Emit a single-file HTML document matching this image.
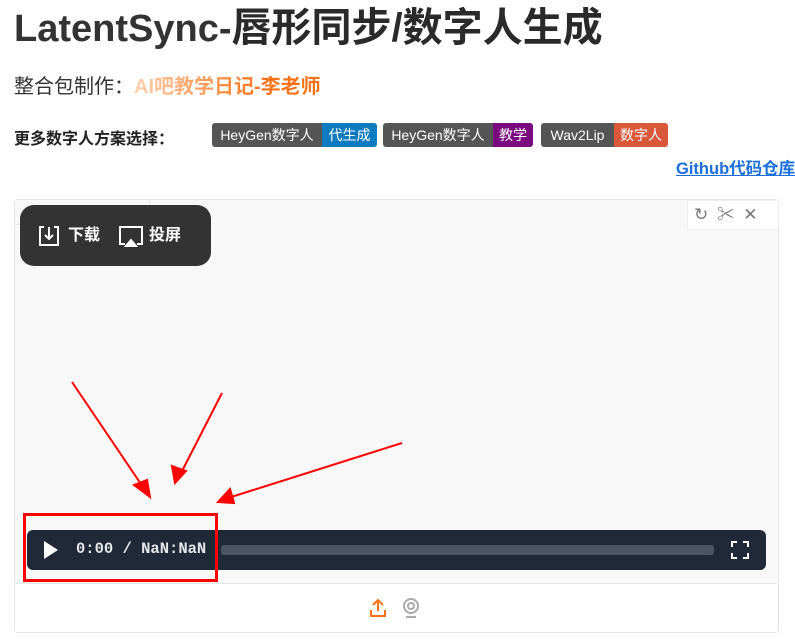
<!DOCTYPE html>
<html><head><meta charset="utf-8"><style>
body{margin:0;width:795px;height:643px;background:#fff;font-family:"Liberation Sans","Noto Sans CJK SC",sans-serif;position:relative;overflow:hidden;color:#222}
.a{position:absolute;white-space:nowrap}
h1{position:absolute;left:14px;top:-5px;margin:0;font-size:40px;font-weight:600;color:#2a2a2a}
h1 .l{font-weight:bold;font-family:"Liberation Sans",sans-serif;font-size:38px;color:#333}
.sub{left:14px;top:70px;font-size:20px;color:#333}
.sub b{background:linear-gradient(90deg,#ffd0b0,#f97316 70%);-webkit-background-clip:text;color:transparent}
.more{left:14px;top:125px;font-size:16px;font-weight:bold}
.bd{position:absolute;top:123px;height:24px;font-size:14px;color:#fff;display:flex;border-radius:3px;overflow:hidden;line-height:24px}
.bd span{padding:0 5px;background:#555;text-align:center}
.gh{left:676px;top:155px;font-size:16.5px;font-weight:bold;color:#1a6fdc;text-decoration:underline}
.panel{left:14px;top:199px;width:763px;height:432px;border:1px solid #e5e5e5;border-radius:4px;background:#fafafa}
</style></head><body>
<h1><span class="l">LatentSync-</span>唇形同步/数字人生成</h1>
<div class="a sub">整合包制作：<b>AI吧教学日记-李老师</b></div>
<div class="a more">更多数字人方案选择：</div>
<div class="bd" style="left:212px"><span style="width:100px">HeyGen数字人</span><span style="background:#0e7bbf;width:45px">代生成</span></div>
<div class="bd" style="left:383px"><span style="width:100px">HeyGen数字人</span><span style="background:#7b0a80;width:30px">教学</span></div>
<div class="bd" style="left:541px"><span style="width:63px">Wav2Lip</span><span style="background:#d9583a;width:44px">数字人</span></div>
<div class="a gh">Github代码仓库</div>
<div class="a panel"></div>
<div class="a" style="left:15px;top:200px;width:761px;height:383px;background:#f8f8f8"></div>
<div class="a" style="left:15px;top:583px;width:762px;height:48px;background:#fff;border-top:1px solid #e5e5e5"></div>
<div class="a" style="left:15px;top:200px;height:24px;border-right:1px solid #e5e5e5;border-bottom:1px solid #e5e5e5;font-size:12px;color:#999;line-height:24px;padding-left:34px;width:100px">1.上传视频(*)</div>
<div class="a" style="left:687px;top:200px;width:84px;height:28px;background:#fff;border:1px solid #eee;font-size:17px;color:#777;line-height:28px;letter-spacing:9px;padding-left:6px">↻✂✕</div>
<div class="a" style="left:20px;top:205px;width:191px;height:61px;background:#333;border-radius:14px;color:#fff;font-size:16px;font-weight:bold;line-height:61px">
<svg style="position:absolute;left:17px;top:19px" width="24" height="24" viewBox="0 0 24 24" fill="none" stroke="#fff" stroke-width="2"><path d="M7 3H3v18h18V3h-4M12 3v12M8 11l4 4 4-4"/></svg>
<span style="position:absolute;left:48px">下载</span>
<svg style="position:absolute;left:98px;top:19px" width="26" height="24" viewBox="0 0 26 24" fill="none" stroke="#fff" stroke-width="2"><path d="M7 20H2V3h22v17h-5"/><path d="M8 22l5-6 5 6z" fill="#fff"/></svg>
<span style="position:absolute;left:129px">投屏</span></div>
<div class="a" style="left:27px;top:530px;width:739px;height:40px;background:#1f2937;border-radius:6px"></div>
<div class="a" style="left:44px;top:541px;width:0;height:0;border-left:14px solid #fff;border-top:9px solid transparent;border-bottom:9px solid transparent"></div>
<div class="a" style="left:76px;top:540px;font-family:'Liberation Mono',monospace;font-size:15.5px;font-weight:bold;color:#e5e7eb">0:00 / NaN:NaN</div>
<div class="a" style="left:221px;top:545px;width:493px;height:10px;background:#4b5563;border-radius:3px"></div>
<svg class="a" style="left:731px;top:541px" width="18" height="18" viewBox="0 0 18 18" fill="none" stroke="#fff" stroke-width="2"><path d="M1 6V1h5M12 1h5v5M17 12v5h-5M6 17H1v-5"/></svg>
<div class="a" style="left:23px;top:513px;width:189px;height:63px;border:3px solid #f00"></div>
<svg class="a" style="left:0;top:0" width="795" height="643"><g fill="#f00" stroke="#f00" stroke-width="2"><line x1="72" y1="382" x2="145" y2="490"/><polygon points="150,497 134,485 147,480"/><line x1="222" y1="393" x2="180" y2="475"/><polygon points="175,483 172,466 186,471"/><line x1="402" y1="443" x2="228" y2="498"/><polygon points="218,502 230,489 234,503"/></g></svg>
<svg class="a" style="left:369px;top:598px" width="18" height="20" viewBox="0 0 18 20" fill="none" stroke="#f97316" stroke-width="2"><path d="M9 13V2M4 7l5-5 5 5M2 12v6h14v-6"/></svg>
<svg class="a" style="left:402px;top:597px" width="18" height="22" viewBox="0 0 18 22" fill="none" stroke="#aaa" stroke-width="2"><circle cx="9" cy="9" r="7"/><circle cx="9" cy="9" r="3"/><path d="M4 20h10"/></svg>
</body></html>
